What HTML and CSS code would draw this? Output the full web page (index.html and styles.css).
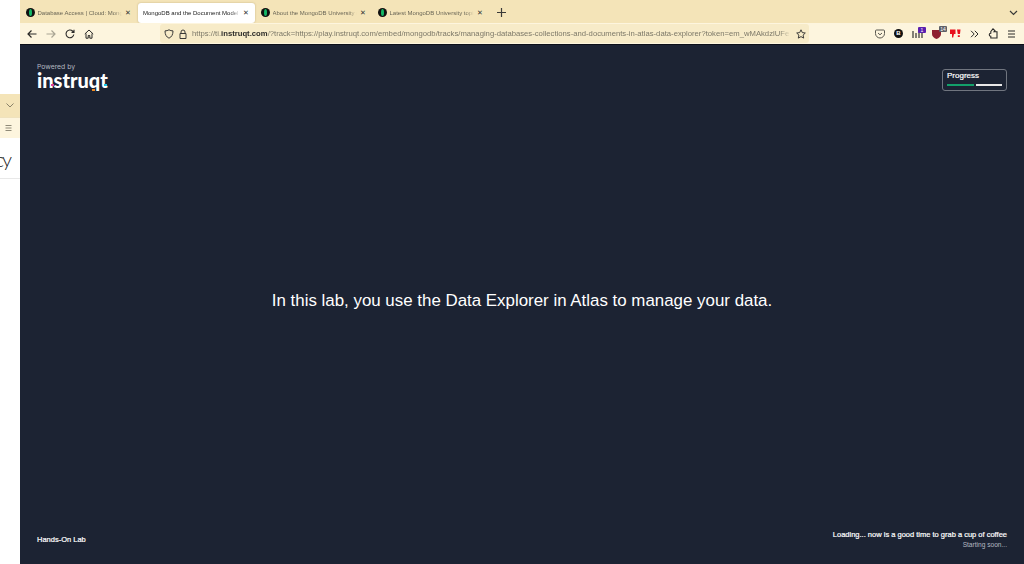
FILE: index.html
```html
<!DOCTYPE html>
<html lang="en">
<head>
<meta charset="utf-8">
<title>MongoDB and the Document Model</title>
<link rel="stylesheet" href="styles.css">
</head>
<body>
<div class="page">
  <aside class="peek">
    <div class="peek-band"><svg class="ic" width="8" height="5" viewBox="0 0 8 5"><path d="M.5 .5L4 4 7.500 .5" fill="none" stroke="#8a8268" stroke-width="1"/></svg></div>
    <div class="peek-menu"><svg class="ic" width="7" height="6" viewBox="0 0 7 6"><path d="M.5 .5h6M.5 3h6M.5 5.500h6" stroke="#8f8a78" stroke-width="1"/></svg></div>
    <div class="peek-text">cy</div>
  </aside>
  <div class="browser">
    <div class="tabbar">
      <div class="tab">
        <span class="favicon"><i></i></span><span class="tab-title">Database Access | Cloud: Mong</span><span class="tab-x">✕</span>
      </div>
      <div class="tab active">
        <span class="tab-title">MongoDB and the Document Model</span><span class="tab-x">✕</span>
      </div>
      <div class="tab">
        <span class="favicon"><i></i></span><span class="tab-title">About the MongoDB University (</span><span class="tab-x">✕</span>
      </div>
      <div class="tab">
        <span class="favicon"><i></i></span><span class="tab-title">Latest MongoDB University topi</span><span class="tab-x">✕</span>
      </div>
      <svg class="newtab" width="9" height="9" viewBox="0 0 9 9"><path d="M4.500 0v9M0 4.500h9" stroke="#3a3a38" stroke-width="1.200"/></svg>
      <svg class="tablist" width="9" height="6" viewBox="0 0 9 6"><path d="M1 1l3.500 3.500L8 1" fill="none" stroke="#3a3a38" stroke-width="1.200"/></svg>
    </div>
    <div class="toolbar">
      <div class="nav">
        <svg width="10" height="10" viewBox="0 0 10 10"><path d="M9.500 5H1M4.500 1.500L1 5l3.500 3.500" fill="none" stroke="#2b2a28" stroke-width="1.200"/></svg>
        <svg width="10" height="10" viewBox="0 0 10 10"><path d="M.5 5H9M5.500 1.500L9 5 5.500 8.500" fill="none" stroke="#a9a594" stroke-width="1.200"/></svg>
        <svg width="10" height="10" viewBox="0 0 10 10"><path d="M8.800 5.500A3.900 3.900 0 1 1 7.600 2L9 3.200M9 .8v2.600H6.500" fill="none" stroke="#2b2a28" stroke-width="1.100"/></svg>
        <svg width="10" height="10" viewBox="0 0 10 10"><path d="M.8 5L5 1l4.200 4M2 4.500v4.700h2.200V6.500h1.600v2.700H8V4.500" fill="none" stroke="#2b2a28" stroke-width="1"/></svg>
      </div>
      <div class="urlbar">
        <svg width="10" height="10" viewBox="0 0 10 10"><path d="M5 .8c1.300.8 2.500 1.100 4 1.100 0 3.500-1.200 6-4 7.300C2.200 7.900 1 5.400 1 1.900c1.500 0 2.700-.3 4-1.100z" fill="none" stroke="#3a3a38" stroke-width="1"/></svg>
        <svg width="8" height="10" viewBox="0 0 8 10"><path d="M2 4.500V3a2 2 0 0 1 4 0v1.500M1 4.500h6v5H1z" fill="none" stroke="#3a3a38" stroke-width="1"/></svg>
        <div class="url">https://ti.<b>instruqt.com</b>/?track=https://play.instruqt.com/embed/mongodb/tracks/managing-databases-collections-and-documents-in-atlas-data-explorer?token=em_wMAkdzlUFe</div>
        <svg class="star" width="10" height="10" viewBox="0 0 10 10"><path d="M5 .8l1.300 2.800 3 .4-2.200 2.100.6 3L5 7.600 2.300 9.100l.6-3L.7 4l3-.4z" fill="none" stroke="#3a3a38" stroke-width="1"/></svg>
      </div>
      <div class="ext">
        <svg width="10" height="10" viewBox="0 0 10 10"><path d="M1.500 1h7a1 1 0 0 1 1 1v2.500a4.500 4.500 0 0 1-9 0V2a1 1 0 0 1 1-1z" fill="none" stroke="#5a5850" stroke-width="1"/><path d="M3 4l2 1.800L7 4" fill="none" stroke="#5a5850" stroke-width="1"/></svg>
        <span class="ext-b">B</span>
        <span class="ext-bars"><svg width="11" height="8" viewBox="0 0 11 8"><path d="M1 1v7M4 3v5M7 1v7M10 3v5" stroke="#77746a" stroke-width="1.800"/></svg><em class="badge purple">1</em></span>
        <span class="ext-shield"><svg width="9" height="10" viewBox="0 0 9 10"><path d="M0 1h9v4c0 2.500-2 4-4.500 5C2 9 0 7.500 0 5z" fill="#8e2030"/></svg><em class="badge grey">14</em></span>
        <svg width="11" height="9" viewBox="0 0 11 9"><path d="M0 .5h5.500v4.500h-1.500l-.8 3.500h-1.200V5H0zM7 .5h3.500L10 5H7.800zM7.800 6.200H9.800V8H7.800z" fill="#e8101c"/></svg>
        <svg width="9" height="8" viewBox="0 0 9 8"><path d="M1 .8L4.200 4 1 7.200M4.800 .8L8 4 4.800 7.200" fill="none" stroke="#2b2a28" stroke-width="1"/></svg>
        <svg width="10" height="11" viewBox="0 0 10 11"><path d="M2.800 3.500L5 .8l2 2-1 1H9V10H2.800V8.300A1.500 1.500 0 0 1 2.800 5.200z" fill="none" stroke="#2b2a28" stroke-width="1.100"/></svg>
        <svg width="9" height="8" viewBox="0 0 9 8"><path d="M1 1h7M1 4h7M1 7h7" stroke="#2b2a28" stroke-width="1.100"/></svg>
      </div>
    </div>
    <main class="lab">
      <header class="lab-top">
        <div class="brand">
          <div class="powered">Powered by</div>
          <div class="logo">instruqt<i class="d1"></i><i class="d2"></i><i class="d3"></i></div>
        </div>
        <div class="progress">
          <div class="progress-label">Progress</div>
          <div class="progress-bars"><span class="seg done"></span><span class="seg"></span></div>
        </div>
      </header>
      <div class="lab-center">In this lab, you use the Data Explorer in Atlas to manage your data.</div>
      <footer class="lab-bottom">
        <div class="lab-name">Hands-On Lab</div>
        <div class="loading">
          <div class="loading-main">Loading... now is a good time to grab a cup of coffee</div>
          <div class="loading-sub">Starting soon...</div>
        </div>
      </footer>
    </main>
  </div>
</div>
</body>
</html>
```
FILE: styles.css
```css
* { box-sizing: border-box; }
html, body { margin: 0; height: 100%; overflow: hidden; background: #fff; }
body { font-family: "Liberation Sans", Arial, sans-serif; }
svg { display: block; flex: none; }

.page { display: flex; width: 1024px; height: 564px; }

.peek { width: 20px; flex: none; padding-top: 94px; background: #fff; overflow: hidden; }
.peek-band { height: 23px; background: #f4e4b8; display: flex; align-items: center; justify-content: center; }
.peek-menu { height: 21px; background: #fdf5de; display: flex; align-items: center; padding-left: 5px; border-top: 1px solid #efe2bd; }
.peek-text { height: 41px; width: 20px; border-bottom: 1px solid #e8e8e8; font-family: "Lato", sans-serif; font-weight: 300; font-size: 20px; letter-spacing: -2px; line-height: 42px; color: #222; white-space: nowrap; direction: rtl; text-align: left; padding-right: 10px; overflow: hidden; }

.browser { flex: 1; min-width: 0; display: flex; flex-direction: column; }

.tabbar { height: 23px; flex: none; background: #f4e4b8; display: flex; align-items: center; padding: 2px 0 0 1px; }
.tab { width: 117px; height: 20px; display: flex; align-items: center; padding: 0 5px 0 5px; flex: none; }
.tab.active { width: 117px; background: #fff; border-radius: 3px; margin-right: 1px; box-shadow: 0 0 2px rgba(90,70,20,.35); padding-left: 5px; padding-right: 4px; }
.tab-title { flex: 1; min-width: 0; overflow: hidden; white-space: nowrap; font-size: 6px; color: #6a6656; -webkit-mask-image: linear-gradient(90deg, #000 90%, transparent); mask-image: linear-gradient(90deg, #000 90%, transparent); }
.tab.active .tab-title { color: #1a1a1a; }
.tab-x { flex: none; width: 10px; font-size: 7px; color: #333; text-align: center; margin-left: 1px; font-family: "DejaVu Sans", sans-serif; }
.favicon { width: 9px; height: 9px; flex: none; margin-right: 2.500px; border-radius: 50%; background: #111; display: flex; align-items: center; justify-content: center; }
.favicon i { width: 3px; height: 7px; border-radius: 50%; background: #14b866; }
.newtab { margin-left: 7px; }
.tablist { margin-left: auto; margin-right: 6px; }

.toolbar { height: 21px; flex: none; background: #fdf5de; display: flex; align-items: center; padding: 0 8px 0 7px; }
.nav { display: flex; align-items: center; gap: 9px; width: 133px; }
.urlbar { width: 649px; height: 19px; flex: none; background: #f7ebc8; border-radius: 3px; display: flex; align-items: center; gap: 5px; padding: 0 3px 0 4px; }
.url { flex: 1; min-width: 0; overflow: hidden; white-space: nowrap; font-size: 7.700px; color: #7c7868; -webkit-mask-image: linear-gradient(90deg, #000 98%, transparent); mask-image: linear-gradient(90deg, #000 98%, transparent); }
.url b { color: #2b2a28; }
.ext { flex: 1; display: flex; align-items: center; justify-content: flex-end; gap: 9px; }
.ext-b { width: 9px; height: 9px; border-radius: 50%; background: #111; color: #fff; font-size: 6px; font-weight: 700; line-height: 9px; text-align: center; }
.ext-bars, .ext-shield { position: relative; display: block; }
.badge { position: absolute; right: -3px; top: -3px; height: 6px; min-width: 8px; font-size: 5px; line-height: 6px; font-style: normal; text-align: center; color: #fff; border-radius: 1px; }
.badge.purple { background: #5a1fb0; }
.badge.grey { background: #5e6068; right: -6px; }

.lab { flex: 1; min-height: 0; background: #1c2333; border-top: 1px solid #0c0f18; color: #fff; display: flex; flex-direction: column; padding: 18px 17px 15px 17px; }
.lab-top { display: flex; justify-content: space-between; align-items: flex-start; }
.powered { font-family: "Inter", sans-serif; font-size: 6.800px; line-height: 8px; color: #b4b8c2; }
.logo { position: relative; font-family: "Lato", sans-serif; font-weight: 900; font-size: 20px; line-height: 18px; color: #fff; }
.logo i { position: absolute; width: 3px; height: 2px; }
.logo .d1 { left: 14px; top: 13px; background: #e0409a; }
.logo .d2 { left: 55px; top: 18px; background: #f08a1e; }
.logo .d3 { left: 67px; top: 13px; background: #1cc8e8; }
.progress { width: 65px; height: 22px; margin-top: 6px; border: 1px solid #70757f; border-radius: 3px; padding: 1px 4px 0; }
.progress-label { font-size: 8px; line-height: 10px; -webkit-text-stroke: .2px #fff; }
.progress-bars { display: flex; gap: 2px; margin-top: 3px; }
.seg { flex: 1; height: 1.500px; background: #e8e8e8; }
.seg.done { background: #13a06a; }
.lab-center { flex: 1; display: flex; align-items: center; justify-content: center; font-size: 16.900px; padding-bottom: 20px; }
.lab-bottom { display: flex; justify-content: space-between; align-items: flex-start; }
.lab-name { font-size: 7.500px; line-height: 10px; margin-top: 5px; -webkit-text-stroke: .2px #fff; }
.loading { text-align: right; }
.loading-main { font-size: 7.500px; line-height: 10px; -webkit-text-stroke: .2px #fff; }
.loading-sub { font-size: 6.600px; line-height: 9px; color: #b4b8c2; }
```
